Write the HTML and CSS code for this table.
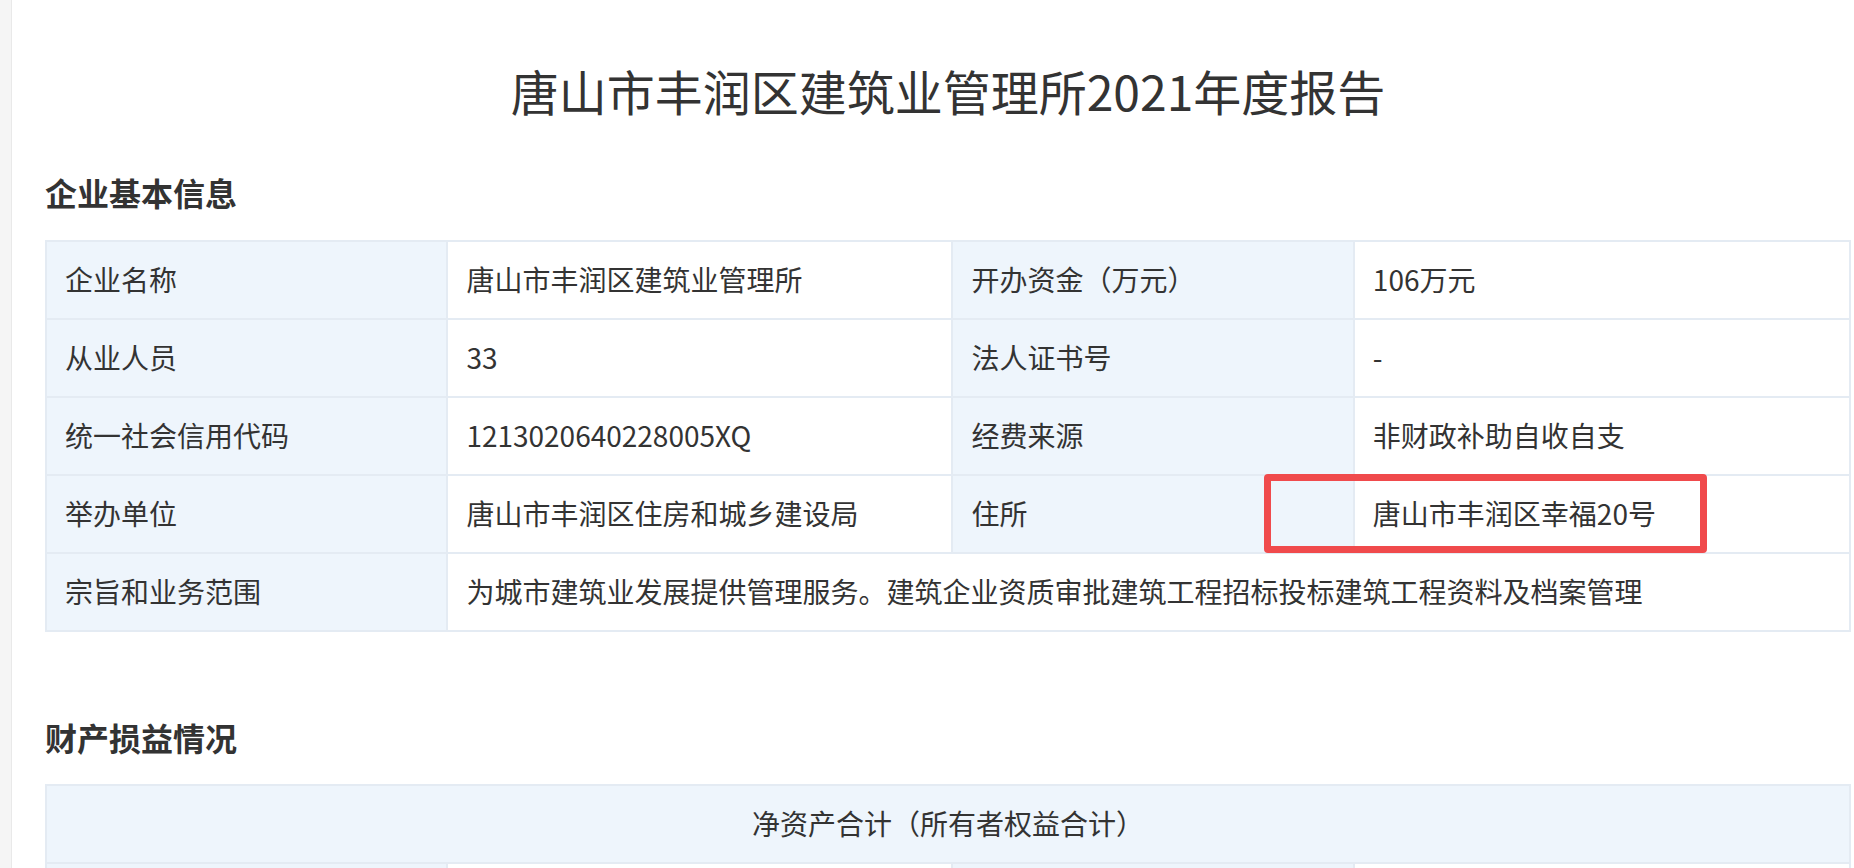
FILE: index.html
```html
<!DOCTYPE html>
<html lang="zh-CN">
<head>
  <meta charset="UTF-8" />
  <meta name="viewport" content="width=device-width, initial-scale=1.0"/>
  <title>唐山市丰润区建筑业管理所2021年度报告</title>
  <link rel="stylesheet" href="styles.css">
</head>
<body>

  <div class="layout">
    <!-- left edge strip -->
    <aside class="side"></aside>

    <main class="report">
      <h1 class="report-title">唐山市丰润区建筑业管理所2021年度报告</h1>

      <!-- 企业基本信息 -->
      <h2 class="section-title">企业基本信息</h2>
      <table class="info-table">
        <colgroup>
          <col class="col-label">
          <col class="col-value">
          <col class="col-label">
          <col>
        </colgroup>
        <tr>
          <td class="label">企业名称</td>
          <td>唐山市丰润区建筑业管理所</td>
          <td class="label">开办资金（万元）</td>
          <td>106万元</td>
        </tr>
        <tr>
          <td class="label">从业人员</td>
          <td>33</td>
          <td class="label">法人证书号</td>
          <td>-</td>
        </tr>
        <tr>
          <td class="label">统一社会信用代码</td>
          <td>1213020640228005XQ</td>
          <td class="label">经费来源</td>
          <td>非财政补助自收自支</td>
        </tr>
        <tr>
          <td class="label">举办单位</td>
          <td>唐山市丰润区住房和城乡建设局</td>
          <td class="label">住所</td>
          <td class="marked">唐山市丰润区幸福20号<span class="mark"></span></td>
        </tr>
        <tr>
          <td class="label">宗旨和业务范围</td>
          <td colspan="3">为城市建筑业发展提供管理服务。建筑企业资质审批建筑工程招标投标建筑工程资料及档案管理</td>
        </tr>
      </table>

      <!-- 财产损益情况 -->
      <h2 class="section-title second">财产损益情况</h2>
      <table class="info-table">
        <colgroup>
          <col class="col-label">
          <col class="col-value">
          <col class="col-label">
          <col>
        </colgroup>
        <tr>
          <td class="label head" colspan="4">净资产合计（所有者权益合计）</td>
        </tr>
        <tr>
          <td class="label"></td>
          <td></td>
          <td class="label"></td>
          <td></td>
        </tr>
      </table>
    </main>
  </div>

</body>
</html>
```

FILE: styles.css
```css
html, body {
  margin: 0;
  padding: 0;
  height: 100%;
  overflow: hidden;
}

body {
  font-family: "Noto Sans CJK SC", "Liberation Sans", sans-serif;
  color: #333;
  background: #fff;
}

.layout {
  display: flex;
  min-height: 100%;
}

.side {
  width: 11px;
  flex-shrink: 0;
  background: #f5f5f5;
  border-right: 1px solid #e9e9e9;
}

.report {
  flex: 1;
  padding: 0 3px 0 33px;
}

.report-title {
  margin: 54px 0 0;
  font-size: 48px;
  line-height: 72px;
  font-weight: normal;
  text-align: center;
  color: #333;
}

.section-title {
  margin: 42px 0 24px;
  font-size: 32px;
  line-height: 48px;
  font-weight: bold;
  color: #333;
}

.section-title.second {
  margin-top: 81px;
  margin-bottom: 23px;
}

.info-table {
  width: 100%;
  border-collapse: collapse;
  table-layout: fixed;
  font-size: 28px;
}

.col-label {
  width: 22.25%;
}

.col-value {
  width: 28%;
}

.info-table td {
  height: 76px;
  padding: 0 18px;
  border: 2px solid #e4ebf3;
  background: #fff;
  white-space: nowrap;
  line-height: 1.2;
}

.info-table td.label {
  background: #eef5fc;
}

.info-table td.head {
  text-align: center;
}

.marked {
  position: relative;
}

.mark {
  position: absolute;
  left: -91px;
  top: -2px;
  width: 443px;
  height: 79px;
  box-sizing: border-box;
  border: 7px solid #f04a4c;
  border-radius: 4px;
}
```
